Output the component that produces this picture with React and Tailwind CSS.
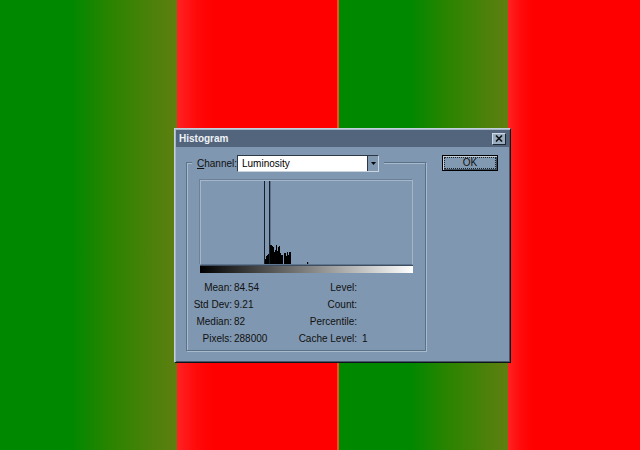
import React from "react";

const bars = [
  // [x, height] inside the histogram plot, bottom = 83
  [64, 5], [65, 8], [66, 9], [67, 10],
  [69, 19], [70, 19], [71, 18], [72, 17], [73, 12], [74, 14], [75, 19], [76, 13],
  [77, 17], [78, 18], [79, 11], [80, 9], [81, 9], [83, 11], [84, 11], [85, 8],
  [86, 12], [87, 9], [88, 12], [89, 12],
];

export default function App() {
  return (
    <div className="relative w-[640px] h-[450px] flex overflow-hidden font-['Liberation_Sans',Arial,sans-serif]">
      {/* background stripes */}
      <div className="w-[177px] h-full bg-[linear-gradient(to_right,#008800_0%,#008800_40%,#2a8400_62%,#5f7f10_100%)]" />
      <div className="w-[160px] h-full bg-[linear-gradient(to_right,#ff2222_0%,#ff0a0a_12%,#ff0000_22%,#ff0000_100%)]" />
      <div className="w-[2px] h-full bg-[#f25020]" />
      <div className="w-[169px] h-full bg-[linear-gradient(to_right,#008800_0%,#008800_42%,#2a8400_64%,#5f7f10_100%)]" />
      <div className="w-[132px] h-full bg-[linear-gradient(to_right,#ff2222_0%,#ff0a0a_10%,#ff0000_18%,#ff0000_100%)]" />

      {/* dialog */}
      <div className="absolute left-[174px] top-[128px] w-[337px] h-[235px] p-[1px] bg-[#7f97b0] border border-t-[#c3cfdb] border-l-[#c3cfdb] border-r-[#0e141b] border-b-[#0e141b] shadow-[inset_1px_1px_0_#a4b6c8,inset_-1px_-1px_0_#46576a] flex flex-col">
        <div className="h-[17px] bg-[#52657d] flex items-center justify-between pl-[3px] pr-[3px]">
          <span className="text-[10px] font-bold text-[#eef2f6] leading-none">Histogram</span>
          <div className="w-[14px] h-[12px] bg-[#9aacbf] border border-t-[#d0dae4] border-l-[#d0dae4] border-r-[#1c2632] border-b-[#1c2632] flex items-center justify-center">
            <svg width="8" height="7" viewBox="0 0 8 7">
              <path d="M1 0.5 L7 6.5 M7 0.5 L1 6.5" stroke="#111" strokeWidth="1.6" />
            </svg>
          </div>
        </div>

        <div className="flex items-start pl-[10px]">
          {/* group box */}
          <div className="mt-[15px] w-[240px] h-[189px] border border-[#5b728b] shadow-[inset_1px_1px_0_#a8bacb,1px_1px_0_#a8bacb] flex flex-col">
            <div className="-mt-[8px] ml-[5px] self-start flex items-center bg-[#7f97b0] pl-[5px] pr-[5px] text-[10px] text-[#111]">
              <span className="w-[40px] whitespace-nowrap">
                <span className="underline">C</span>hannel:
              </span>
              <div className="w-[142px] h-[17px] flex bg-white border border-t-[#2c3845] border-l-[#2c3845] border-r-[#c9d4de] border-b-[#c9d4de]">
                <span className="flex-1 pl-[4px] leading-[15px] text-[#000]">Luminosity</span>
                <div className="w-[11px] h-full bg-[#8199b1] border-l border-[#2c3845] flex items-center justify-center">
                  <svg width="5" height="3" viewBox="0 0 5 3">
                    <path d="M0 0 H5 L2.5 3 Z" fill="#000" />
                  </svg>
                </div>
              </div>
            </div>

            <div className="ml-[13px] mt-[8px] w-[213px]">
              <div className="h-[85px] border border-t-[#a4b6c7] border-l-[#a4b6c7] border-r-[#a4b6c7] border-b-[#5f7690] shadow-[-1px_-1px_0_#6a8199]">
                <svg width="211" height="83" viewBox="0 0 211 83" className="block">
                  <rect x="63" y="0" width="1" height="83" fill="#16202b" />
                  <rect x="68" y="0" width="1.3" height="83" fill="#16202b" />
                  {bars.map(([x, h]) => (
                    <rect key={x} x={x} y={83 - h} width="1" height={h} fill="#000" />
                  ))}
                  <rect x="106" y="81" width="1.2" height="2" fill="#000" />
                </svg>
              </div>
              <div className="h-[8px] bg-[linear-gradient(to_right,#000000,#ffffff)] border-t border-[#3e4e60]" />
            </div>

            <div className="ml-[4px] mt-[6px] grid grid-cols-[41px_62px_63px_auto] text-[10px] leading-[17px] text-[#111] whitespace-nowrap">
              <span className="text-right">Mean:</span>
              <span className="pl-[2px]">84.54</span>
              <span className="text-right">Level:</span>
              <span className="pl-[5px]"></span>

              <span className="text-right">Std Dev:</span>
              <span className="pl-[2px]">9.21</span>
              <span className="text-right">Count:</span>
              <span className="pl-[5px]"></span>

              <span className="text-right">Median:</span>
              <span className="pl-[2px]">82</span>
              <span className="text-right">Percentile:</span>
              <span className="pl-[5px]"></span>

              <span className="text-right">Pixels:</span>
              <span className="pl-[2px]">288000</span>
              <span className="text-right">Cache Level:</span>
              <span className="pl-[5px]">1</span>
            </div>
          </div>

          {/* OK button */}
          <div className="ml-[16px] mt-[8px] w-[56px] h-[16px] border border-[#000] bg-[#8199b1] p-[1px] shadow-[inset_1px_1px_0_#c4d0dc,inset_-1px_-1px_0_#3f5063]">
            <div className="w-full h-full border border-dotted border-[#222] flex items-center justify-center text-[10px] leading-none text-[#111]">
              OK
            </div>
          </div>
        </div>
      </div>
    </div>
  );
}
